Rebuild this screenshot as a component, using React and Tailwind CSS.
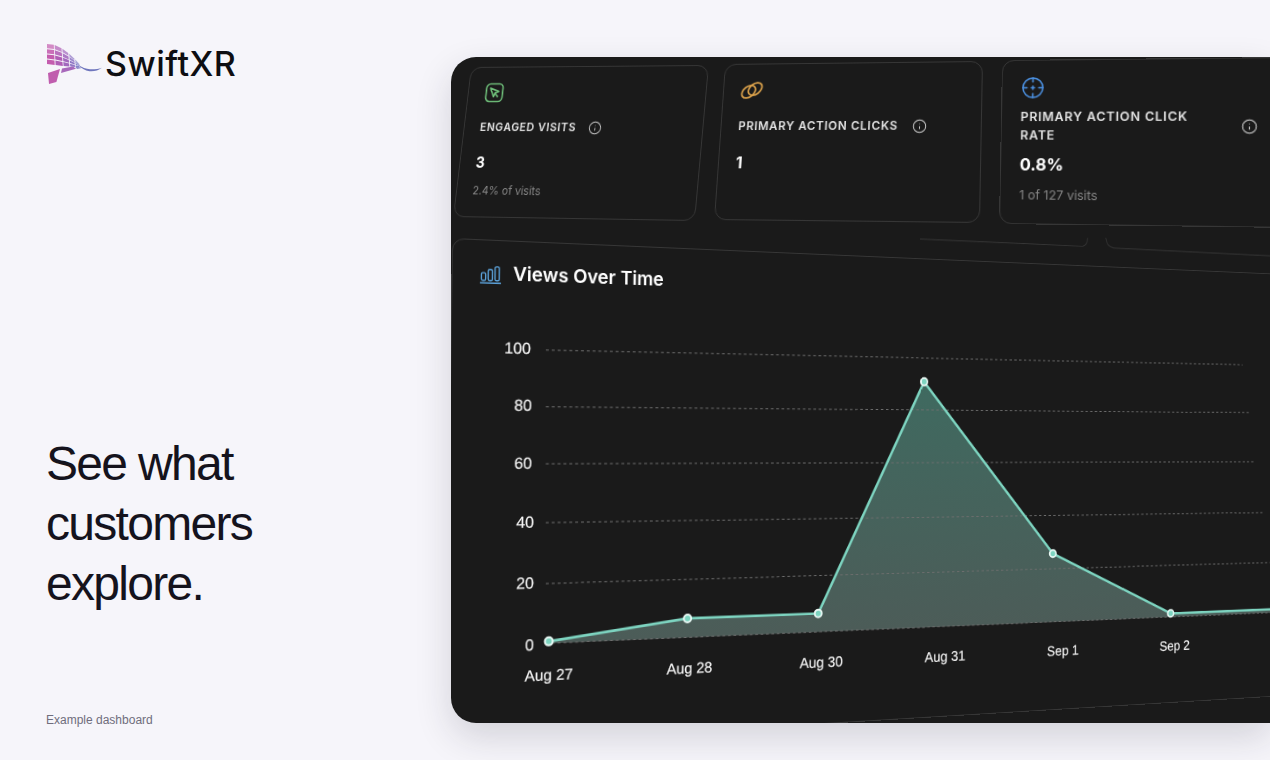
import { Info } from "lucide-react";

// panel sits at this spot on the page, quads below are in page pixels
const PANEL_X = 451;
const PANEL_Y = 57;

// maps a w x h box onto a quad (tl, tr, br, bl)
const makeWarp = (w, h, q) => {
  const [[x0, y0], [x1, y1], [x2, y2], [x3, y3]] = q;
  const dx1 = x1 - x2;
  const dx2 = x3 - x2;
  const dx3 = x0 - x1 + x2 - x3;
  const dy1 = y1 - y2;
  const dy2 = y3 - y2;
  const dy3 = y0 - y1 + y2 - y3;
  const det = dx1 * dy2 - dx2 * dy1;
  const g = (dx3 * dy2 - dx2 * dy3) / det;
  const k = (dx1 * dy3 - dx3 * dy1) / det;
  return {
    a: (x1 - x0 + g * x1) / w,
    b: (x3 - x0 + k * x3) / h,
    c: x0,
    d: (y1 - y0 + g * y1) / w,
    e: (y3 - y0 + k * y3) / h,
    f: y0,
    g: g / w,
    k: k / h,
  };
};

// same thing as a css transform, relative to where the box sits in the flow
const toCss = (w, h, q, ox, oy) => {
  const m = makeWarp(w, h, q.map(([x, y]) => [x - ox, y - oy]));
  return `matrix3d(${m.a},${m.d},0,${m.g},${m.b},${m.e},0,${m.k},0,0,1,0,${m.c},${m.f},0,1)`;
};

const CARD_W = 270;
const CARD_H = 160;
const CHART_W = 1150;
const CHART_H = 500;
const CHART_X = PANEL_X + 2;
const CHART_Y = PANEL_Y + 180;
const CHART_QUAD = [
  [452, 238],
  [1400, 279],
  [1400, 689],
  [445, 747],
];

// page pixel -> chart local pixel
const chartWarp = makeWarp(CHART_W, CHART_H, CHART_QUAD);
const toLocal = (px, py) => {
  const { a, b, c, d, e, f, g, k } = chartWarp;
  const A = e - f * k;
  const B = c * k - b;
  const C = b * f - c * e;
  const D = f * g - d;
  const E = a - c * g;
  const F = c * d - a * f;
  const G = d * k - e * g;
  const H = b * g - a * k;
  const I = a * e - b * d;
  const z = G * px + H * py + I;
  return [(A * px + B * py + C) / z, (D * px + E * py + F) / z];
};
const pts = (list) => list.map(([x, y]) => toLocal(x, y).map((n) => n.toFixed(1)).join(",")).join(" ");
const seg = (x, y) => toLocal(x, y).map((n) => n.toFixed(1)).join(" ");

const series = [
  [548, 641],
  [687, 618],
  [818, 613],
  [924, 381],
  [1053, 553],
  [1171, 613],
  [1270, 609],
  [1300, 608],
];
const gridLines = [
  [[545, 349], [1243, 364]],
  [[545, 406], [1250, 412]],
  [[545, 463], [1256, 461]],
  [[545, 522], [1263, 512]],
  [[545, 583], [1270, 562]],
  [[545, 643], [1300, 611]],
];
const yLabels = [
  ["100", 530, 353],
  ["80", 531, 410],
  ["60", 531, 468],
  ["40", 533, 527],
  ["20", 533, 588],
  ["0", 533, 650],
];
const xLabels = [
  ["Aug 27", 548, 680],
  ["Aug 28", 689, 673],
  ["Aug 30", 821, 667],
  ["Aug 31", 945, 661],
  ["Sep 1", 1063, 655],
  ["Sep 2", 1175, 650],
  ["Sep 3", 1288, 645],
];

const CursorIcon = () => (
  <svg viewBox="0 0 24 24" className="w-6 h-6" fill="none" stroke="#6fc07a" strokeWidth="1.7" strokeLinejoin="round">
    <rect x="2.5" y="2.5" width="19" height="19" rx="4.5" />
    <path d="M7 7l10 3.6-4 1.5-1.6 4z" />
    <path d="M13 13l3.6 3.6" />
  </svg>
);

const RingsIcon = () => (
  <svg viewBox="0 0 24 24" className="w-6 h-6" fill="none" stroke="#d9a04a" strokeWidth="1.8">
    <ellipse cx="8.6" cy="13.4" rx="5.500" ry="8" transform="rotate(52 8.6 13.4)" />
    <ellipse cx="15.4" cy="10.6" rx="5.500" ry="8" transform="rotate(52 15.4 10.6)" />
  </svg>
);

const TargetIcon = () => (
  <svg viewBox="0 0 24 24" className="w-[23px] h-[23px]" fill="none" stroke="#4a8fe0" strokeWidth="1.6" strokeLinecap="round">
    <circle cx="12" cy="12" r="10" />
    <path d="M12 2v4M12 18v4M2 12h4M18 12h4" />
    <path d="M12 10.5v3M10.5 12h3" />
  </svg>
);

const BarsIcon = () => (
  <svg viewBox="0 0 22 20" className="w-[21px] h-5" fill="none" stroke="#5aa0d8" strokeWidth="1.4">
    <rect x="1.5" y="8" width="4.4" height="8" rx="1.6" />
    <rect x="8.6" y="4.5" width="4.4" height="11.5" rx="1.6" />
    <rect x="15.7" y="1.5" width="4.4" height="14.5" rx="1.6" />
    <path d="M0.5 18.6h21" strokeLinecap="round" />
  </svg>
);

const cards = [
  {
    icon: <CursorIcon />,
    label: "Engaged visits",
    value: "3",
    sub: "2.4% of visits",
    quad: [[471, 67], [709, 65], [695, 221], [453, 217]],
  },
  {
    icon: <RingsIcon />,
    label: "Primary action clicks",
    value: "1",
    quad: [[725, 64], [983, 61], [980, 223], [714, 220]],
  },
  {
    icon: <TargetIcon />,
    label: "Primary action click rate",
    value: "0.8%",
    sub: "1 of 127 visits",
    quad: [[1002, 60], [1290, 57], [1290, 228], [999, 224]],
  },
];

const StatCard = ({ card, index }) => (
  <div
    className="w-[270px] h-[160px] shrink-0 origin-top-left rounded-xl border border-[#363636] pl-[18px] pr-5 pt-[15px]"
    style={{ transform: toCss(CARD_W, CARD_H, card.quad, PANEL_X + 16 + index * 282, PANEL_Y + 8) }}
  >
    <div className="h-6">{card.icon}</div>
    <div className="mt-[5px] h-10 flex items-center gap-[14px]">
      <span className="max-w-[193px] text-xs leading-[18px] font-semibold uppercase tracking-[0.06em] text-[#e2e2e2]">
        {card.label}
      </span>
      <Info size={15} strokeWidth={1.5} className="shrink-0 text-[#d0d0d0]" />
    </div>
    <div className="mt-[5px] text-base leading-6 font-bold text-white">{card.value}</div>
    {card.sub && <div className="mt-2 text-xs leading-5 text-[#858585]">{card.sub}</div>}
  </div>
);

const ViewsChart = () => (
  <div
    className="w-[1150px] h-[500px] shrink-0 origin-top-left rounded-xl border border-[#363636] flex flex-col"
    style={{ transform: toCss(CHART_W, CHART_H, CHART_QUAD, CHART_X, CHART_Y) }}
  >
    <div className="h-[67px] shrink-0 flex items-center gap-[12px] pl-[27px]">
      <BarsIcon />
      <span className="text-[19px] font-semibold text-white">Views Over Time</span>
    </div>
    <svg viewBox="0 67 1150 433" className="w-full h-[433px] overflow-visible" style={{ fontFamily: "'Liberation Sans', Arial, sans-serif" }}>
      <defs>
        <linearGradient id="area" x1="0" y1="0" x2="0" y2="1">
          <stop offset="0%" stopColor="#3f6a60" />
          <stop offset="100%" stopColor="#4c5c58" />
        </linearGradient>
      </defs>
      <path
        d={`M${seg(920, 238)} L${seg(1083, 245)} Q${seg(1087, 245)} ${seg(1088, 237)} M${seg(1106, 237)} Q${seg(1107, 246)} ${seg(1114, 247)} L${seg(1290, 256)}`}
        fill="none"
        stroke="#363636"
        strokeWidth="1"
      />
      <polygon points={pts([...series, [1300, 611], [548, 643]])} fill="url(#area)" />
      {gridLines.map((line, i) => (
        <polyline key={i} points={pts(line)} fill="none" stroke="#6e6e6e" strokeWidth="1" strokeDasharray="3 3" />
      ))}
      <polyline points={pts(series)} fill="none" stroke="#7dd4c0" strokeWidth="2.8" strokeLinejoin="round" />
      {series.slice(0, 6).map(([x, y], i) => {
        const [cx, cy] = toLocal(x, y);
        return <circle key={i} cx={cx} cy={cy} r={4} fill="#7dd4c0" stroke="#e9f8f4" strokeWidth="2" />;
      })}
      {yLabels.map(([text, x, y]) => {
        const [lx, ly] = toLocal(x, y);
        return (
          <text key={text} x={lx} y={ly} textAnchor="end" fontSize="16" fill="#f6f6f6" stroke="#f6f6f6" strokeWidth="0.25">
            {text}
          </text>
        );
      })}
      {xLabels.map(([text, x, y]) => {
        const [lx, ly] = toLocal(x, y);
        return (
          <text key={text} x={lx} y={ly} textAnchor="middle" fontSize="15.5" fill="#f6f6f6" stroke="#f6f6f6" strokeWidth="0.25">
            {text}
          </text>
        );
      })}
    </svg>
  </div>
);

// logo mesh: strips between a curved top edge and a flatter bottom edge
const topEdge = (t) => [
  (1 - t) * (1 - t) * 7 + 2 * t * (1 - t) * 22 + t * t * 42,
  (1 - t) * (1 - t) * 5 + 2 * t * (1 - t) * 4 + t * t * 28,
];
const bottomEdge = (t) => [7 + 35 * t, 25 + 3 * Math.sin(t * 1.6)];
const meshPoint = (t, r) => {
  const [tx, ty] = topEdge(t);
  const [bx, by] = bottomEdge(t);
  return `${(tx + (bx - tx) * r).toFixed(1)},${(ty + (by - ty) * r).toFixed(1)}`;
};
const logoCols = [
  [0, 0.22, "#c45cae"],
  [0.245, 0.45, "#b05eb5"],
  [0.475, 0.64, "#a268bd"],
  [0.665, 0.8, "#9178c6"],
  [0.825, 0.93, "#8684cb"],
];
const logoRows = [
  [0, 0.21, 0.3],
  [0.26, 0.47, 0.12],
  [0.52, 0.72, 0],
  [0.77, 1, 0],
];

const Logo = () => (
  <svg viewBox="6 4 56 41" className="w-[56px] h-[41px] shrink-0">
    {logoCols.map(([t0, t1, color], c) =>
      logoRows.map(([r0, r1, fade], r) => (
        <polygon
          key={`${c}-${r}`}
          points={[meshPoint(t0, r0), meshPoint(t1, r0), meshPoint(t1, r1), meshPoint(t0, r1)].join(" ")}
          fill={color}
          fillOpacity={1 - fade}
        />
      ))
    )}
    <path d="M8 34l12-4-3.600 13L9 45z" fill="#c05dae" />
    <path d="M22 29.600l11-2.200 3 2.400-15 4.200z" fill="#a868bb" />
    <path d="M35 27.600l8 1.200-6 1.200z" fill="#8f8dcc" />
    <path d="M38 25.500c4 3 8 4.500 12 4.800 4.500.2 8.500-.4 12-1.600-3.500 2.800-8 3.900-12.500 3.500-4.500-.4-8.500-2.900-11.500-6.700z" fill="#6f76bd" />
  </svg>
);

export default function App() {
  return (
    <div className="w-[1270px] h-[760px] overflow-hidden bg-[#f6f5fa] flex" style={{ fontFamily: "Inter, sans-serif" }}>
      <div className="w-[451px] shrink-0 pl-[46px] flex flex-col">
        <div className="mt-[43px] h-[41px] flex items-center gap-[3px]">
          <Logo />
          <span className="text-[34px] font-medium leading-none tracking-[0.5px] text-[#0e0e12]">SwiftXR</span>
        </div>
        <h1
          className="mt-[350px] text-[48px] leading-[60px] font-normal tracking-[-1.7px] text-[#15131d]"
          style={{ fontFamily: "'Liberation Sans', Arial, sans-serif" }}
        >
          See what
          <br />
          customers
          <br />
          explore.
        </h1>
        <p className="mt-[98px] text-xs text-[#6f6d7c]" style={{ fontFamily: "'Liberation Sans', Arial, sans-serif" }}>
          Example dashboard
        </p>
      </div>
      <div className="mt-[57px] w-[819px] h-[666px] shrink-0 overflow-hidden rounded-l-[25px] bg-[#1a1a1a] shadow-[0_14px_36px_rgba(30,30,50,0.16)]">
        <div className="flex gap-3 pl-4 pt-2">
          {cards.map((card, i) => (
            <StatCard key={card.label} card={card} index={i} />
          ))}
        </div>
        <div className="mt-3 ml-0.5">
          <ViewsChart />
        </div>
      </div>
    </div>
  );
}
